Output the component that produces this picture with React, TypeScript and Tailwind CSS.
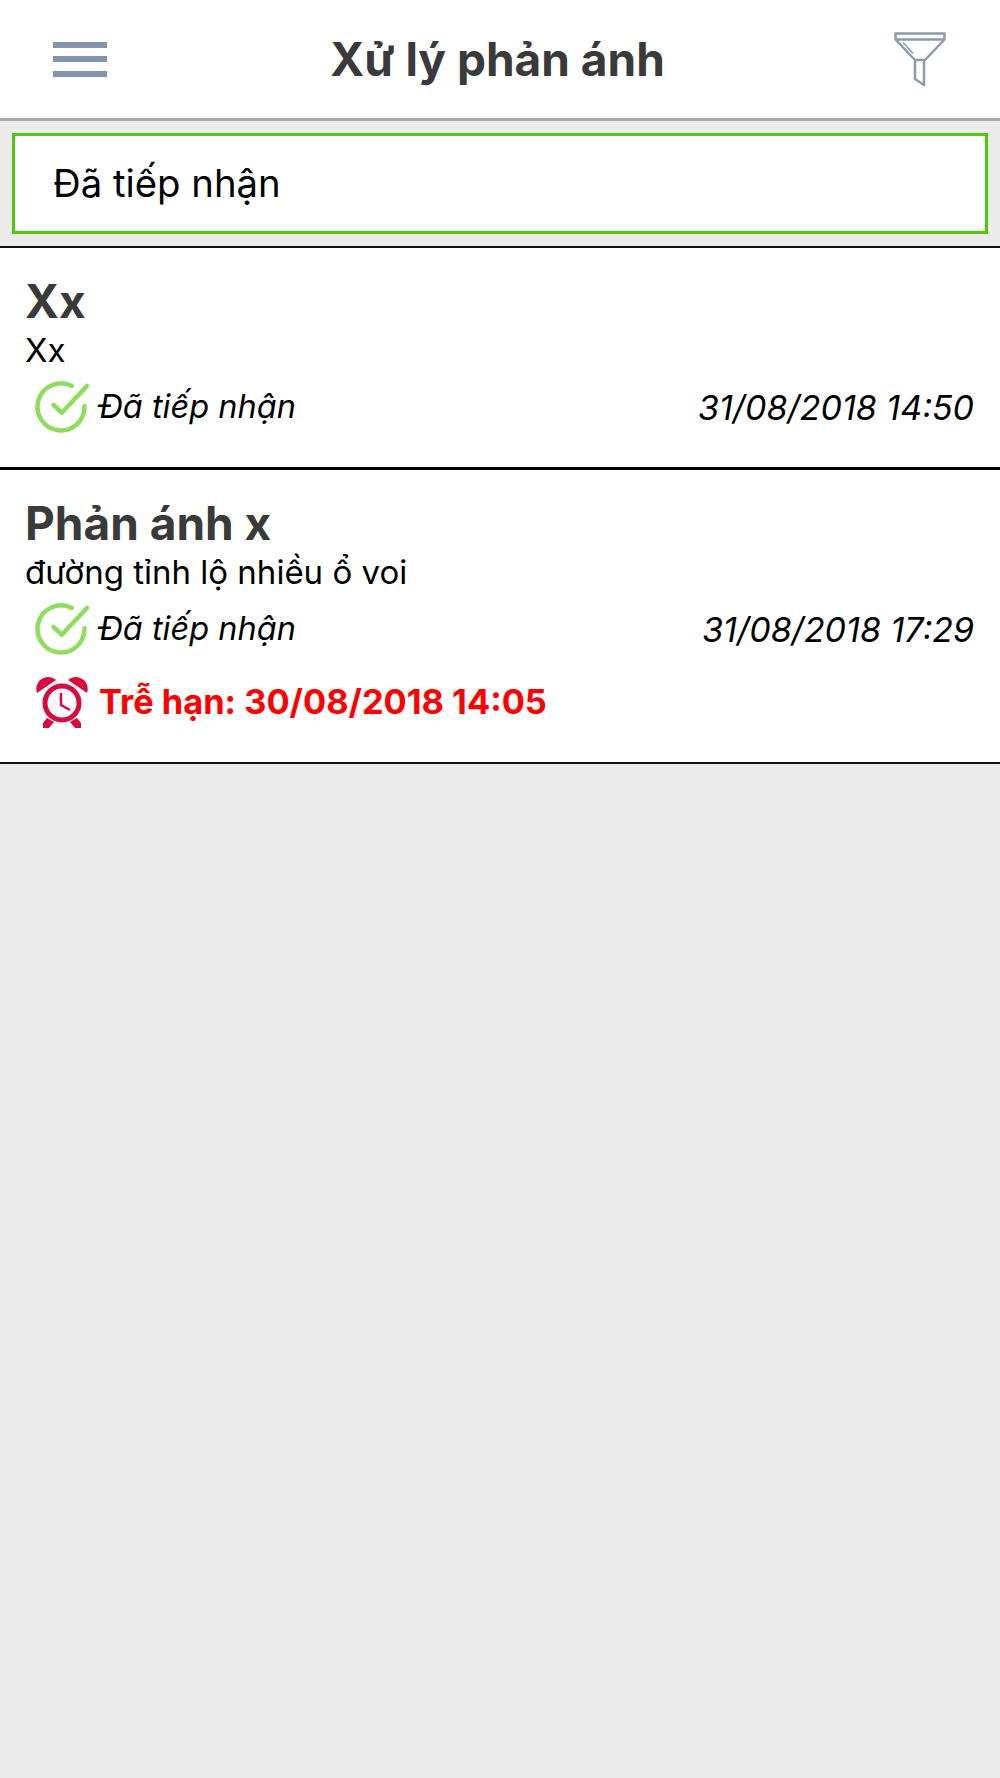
const checkIcon = (
  <svg width="54" height="52" viewBox="0 -2 54 52" fill="none" stroke="#8fdd5c" strokeWidth="4.5" strokeLinecap="round" strokeLinejoin="round" className="shrink-0">
    <path d="M36.700 3A23.500 23.500 0 1 0 49.500 23" />
    <path d="M18.500 22l8.200 7.700L52 3" />
  </svg>
)

const alarmIcon = (
  <svg width="54" height="56" viewBox="0 0 54 56" className="shrink-0">
    <path d="M2 19C-2 7 12-2 21 6z" fill="#d80b3c" />
    <path d="M52 19C56 7 42-2 33 6z" fill="#d80b3c" />
    <path d="M12 44l-4 5v5h6l5-6zM42 44l4 5v5h-6l-5-6z" fill="#d80b3c" />
    <circle cx="27" cy="29" r="17" fill="#fff" stroke="#d80b3c" strokeWidth="5" />
    <path d="M26 19v12l9 5" fill="none" stroke="#d80b3c" strokeWidth="2.500" />
  </svg>
)

function Status({ time }: { time: string }) {
  return (
    <div className="mt-[12px] flex items-center justify-between pl-[35px] pr-[26px]">
      <div className="flex items-center gap-[10px]">
        {checkIcon}
        <span className="text-[32.500px] italic text-black">Đã tiếp nhận</span>
      </div>
      <span className="text-[34px] italic text-black">{time}</span>
    </div>
  )
}

export default function App() {
  return (
    <div className="min-h-[1778px] bg-[#ebebeb] font-['Inter',sans-serif]">
      <header className="flex h-[121px] items-center justify-between border-b-[3px] border-[#a8a8a8] bg-white pl-[53px] pr-[54px]">
        <div className="flex w-[54px] flex-col gap-[8.5px]">
          <div className="h-[6px] bg-[#8294a9]" />
          <div className="h-[6px] bg-[#8294a9]" />
          <div className="h-[6px] bg-[#8294a9]" />
        </div>
        <h1 className="mr-[6px] text-[46px] font-bold text-[#3a3a3a]">Xử lý phản ánh</h1>
        <svg width="52" height="54" viewBox="0 0 52 54" fill="none" stroke="#8a9bb0" strokeWidth="2.5" strokeLinejoin="round">
          <path d="M1.500 1.500h49v6h-49zM1.500 7.500L21 28h10L50.500 7.500M21 28v19l9 6V28" />
          <path d="M9 10.500l10 11" strokeWidth="1.500" />
        </svg>
      </header>

      <div className="px-3 py-3">
        <div className="flex h-[101px] items-center border-[3px] border-[#4ec90e] bg-white pl-[38px] text-[38.300px] text-black">
          Đã tiếp nhận
        </div>
      </div>

      <section className="h-[224px] border-t-2 border-b-[3px] border-t-[#111] border-b-black bg-white pt-[28px]">
        <h2 className="pl-[25px] text-[46px] leading-[50px] font-bold text-[#3a3a3a]">Xx</h2>
        <p className="mt-[5px] pl-[25px] text-[33px] leading-[38px] text-black">Xx</p>
        <Status time="31/08/2018 14:50" />
      </section>

      <section className="h-[294px] border-b-2 border-[#111] bg-white pt-[28px]">
        <h2 className="pl-[25px] text-[46px] leading-[50px] font-bold text-[#3a3a3a]">Phản ánh x</h2>
        <p className="mt-[5px] pl-[25px] text-[33px] leading-[38px] text-black">đường tỉnh lộ nhiều ổ voi</p>
        <Status time="31/08/2018 17:29" />
        <div className="mt-[19px] flex items-center gap-[10px] pl-[35px]">
          {alarmIcon}
          <span className="text-[34.400px] font-bold text-[#ff0000]">Trễ hạn: 30/08/2018 14:05</span>
        </div>
      </section>
    </div>
  )
}
